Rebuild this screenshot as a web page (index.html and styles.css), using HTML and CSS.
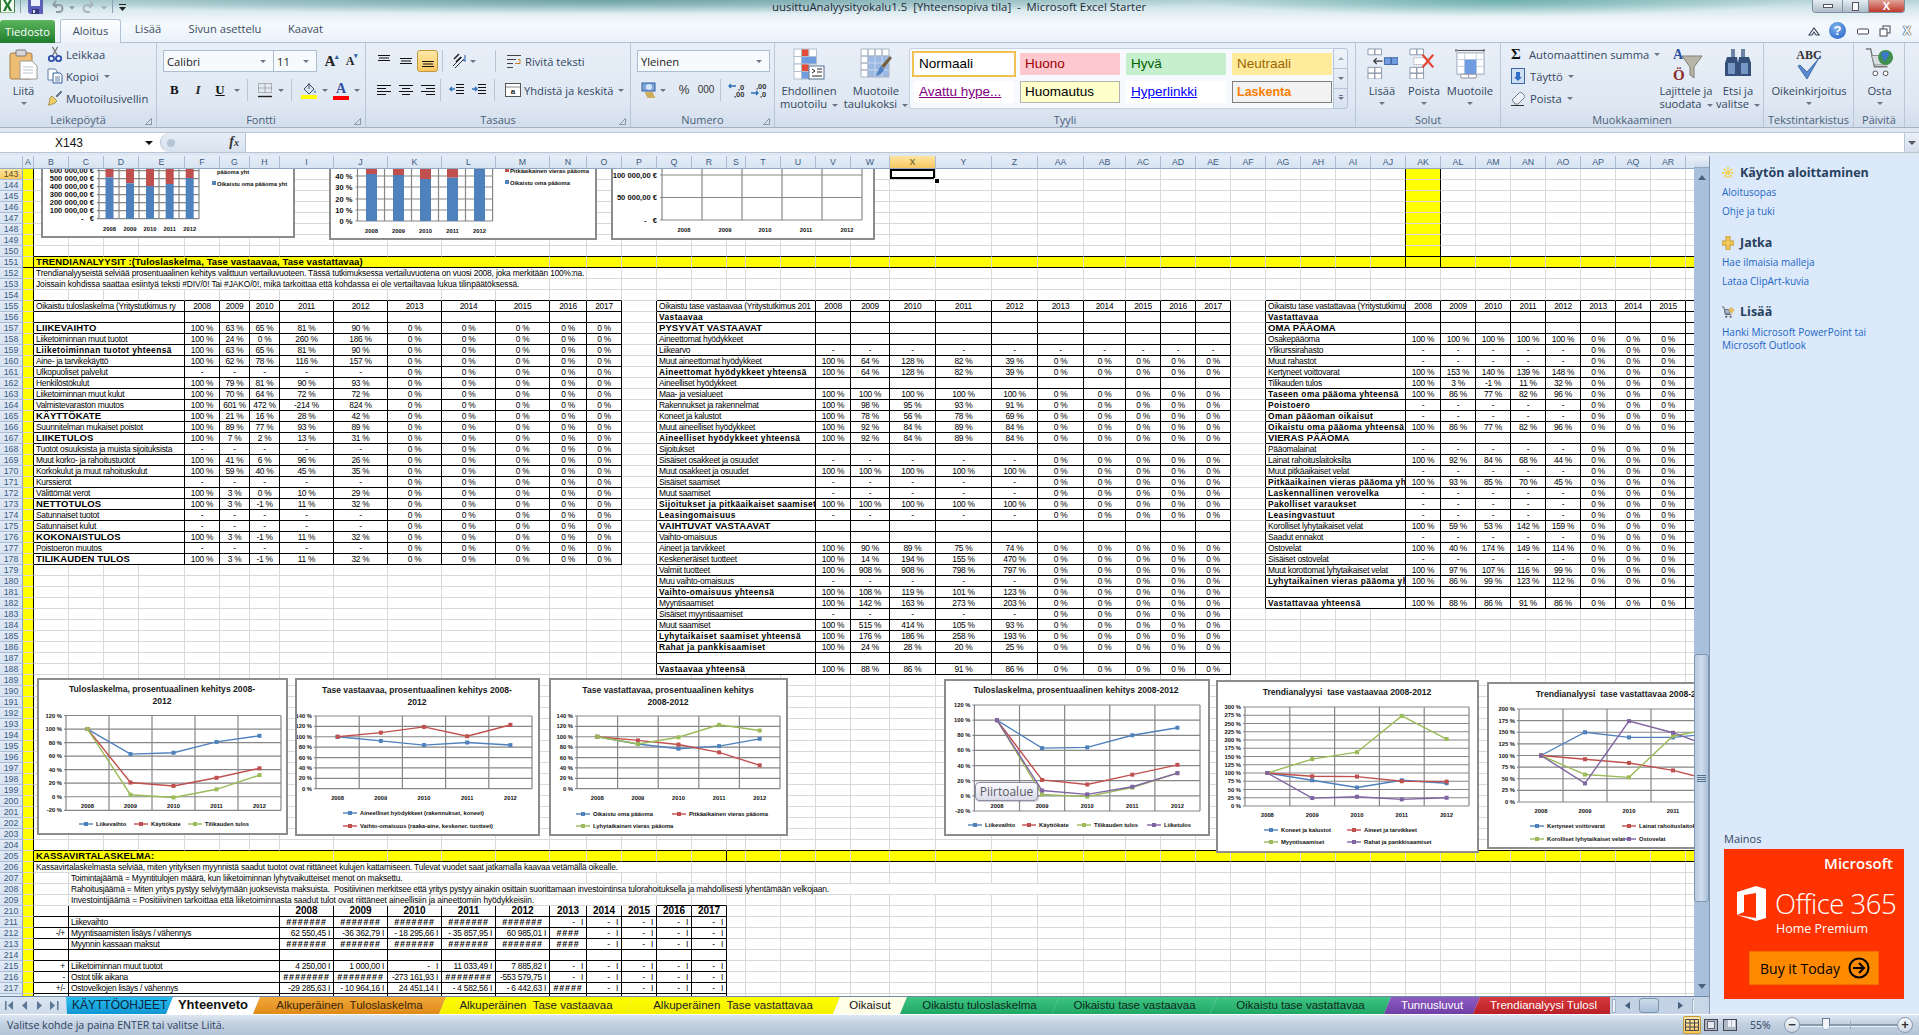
FILE: index.html
```html
<!DOCTYPE html>
<html lang="fi">
<head>
<meta charset="utf-8">
<title>uusittuAnalyysityokalu1.5 [Yhteensopiva tila] - Microsoft Excel Starter</title>
<link rel="stylesheet" href="styles.css">
</head>
<body>
<div class="app">
  <header class="top">
    <div class="titlebar">
      <div class="qat">
        <svg class="qi qi-x" viewBox="0 0 15 13"><rect x=".5" y="-2" width="14" height="15" rx="1" fill="#f4f9f2" stroke="#3f7d3f"/><path d="M3 0l3 5-3 6h2.600L7.500 7l2 4h2.600L9 5l3-5H9.500L7.500 3.500 5.500 0z" fill="#1f7a2e"/></svg>
        <span class="qsep"></span>
        <svg class="qi qi-s" viewBox="0 0 15 14"><path d="M0-1h15v15H2l-2-2z" fill="#5b5fb8"/><rect x="3" y="-1" width="9" height="7" fill="#eef3fb"/><rect x="4" y="9" width="7" height="5" fill="#3a3c80"/><rect x="5" y="10" width="2" height="3" fill="#d9def0"/></svg>
        <svg class="qi qi-u" viewBox="0 0 14 13"><path d="M3 5h6a3.500 3.500 0 0 1 0 7H6M3 5l3-4M3 5l4 2.500" fill="none" stroke="#8d9aa8" stroke-width="2"/></svg>
        <svg class="qi qi-a" viewBox="0 0 7 4"><path d="M0 0h7L3.500 4z" fill="#8d9aa8"/></svg>
        <svg class="qi qi-u" viewBox="0 0 14 13"><path d="M11 5H5a3.500 3.500 0 0 0 0 7h3M11 5L8 1M11 5L7 7.500" fill="none" stroke="#a8b4bf" stroke-width="2"/></svg>
        <svg class="qi qi-a" viewBox="0 0 7 4"><path d="M0 0h7L3.500 4z" fill="#a0abb6"/></svg>
        <span class="qsep"></span>
        <svg class="qi qi-c" viewBox="0 0 7 7"><path d="M0 0h7v1H0zM0 3h7L3.500 7z" fill="#222"/></svg>
      </div>
      <div class="wintitle">uusittuAnalyysityokalu1.5&nbsp; [Yhteensopiva tila]&nbsp; -&nbsp; Microsoft Excel Starter</div>
      <div class="winbtns">
        <span class="wb wb-min"><i></i></span>
        <span class="wb wb-max"><i></i></span>
        <span class="wb wb-close">X</span>
      </div>
    </div>
    <nav class="tabs">
      <span class="tab-file">Tiedosto</span>
      <span class="tab tab-on">Aloitus</span>
      <span class="tab tab-l">Lisää</span>
      <span class="tab tab-s">Sivun asettelu</span>
      <span class="tab tab-k">Kaavat</span>
      <div class="helpicons">
        <svg class="hi" viewBox="0 0 12 12"><path d="M1 10l5-7 5 7-3 0-2-3-2 3z" fill="#fff" stroke="#3a4a5e" stroke-width="1.200"/></svg>
        <span class="help">?</span>
        <svg class="hi" viewBox="0 0 12 12"><rect x=".5" y="4" width="11" height="5" rx="1" fill="#fff" stroke="#445"/></svg>
        <svg class="hi" viewBox="0 0 12 12"><rect x="4" y="1" width="7" height="7" fill="#fff" stroke="#445"/><rect x="1" y="4" width="7" height="7" fill="#fff" stroke="#445"/></svg>
        <span class="closex">X</span>
      </div>
    </nav>
  </header>

  <section class="ribbon">
    <div class="grp g-clip">
      <div class="gbody">
        <div class="big big-paste">
          <svg class="bigi" viewBox="0 0 30 32"><rect x="1" y="5" width="22" height="26" rx="2" fill="#eebd73" stroke="#a57f44"/><rect x="7" y="2" width="10" height="6" rx="1" fill="#d8d8d8" stroke="#777"/><path d="M11 13h12l5 5v13H11z" fill="#fff" stroke="#9a9a9a"/><path d="M14 19h10M14 22h10M14 25h10" stroke="#b8c4d2"/></svg>
          <span>Liitä</span><em class="caret"></em>
        </div>
        <div class="col3">
          <div class="sm"><svg class="i16" viewBox="0 0 16 18"><path d="M5 1l6 10M11 1L5 11" stroke="#777" stroke-width="1.500"/><circle cx="4" cy="14" r="3" fill="none" stroke="#2f4fa8" stroke-width="2"/><circle cx="12" cy="14" r="3" fill="none" stroke="#2f4fa8" stroke-width="2"/></svg>Leikkaa</div>
          <div class="sm"><svg class="i16" viewBox="0 0 16 16"><path d="M1 1h7l2 2v9H1z" fill="#fff" stroke="#5f7fa8"/><path d="M6 5h7l2 2v8H6z" fill="#fff" stroke="#2f5f9f"/><path d="M8 9h5M8 11h5M8 13h5" stroke="#5f7fa8"/></svg>Kopioi<em class="caret car-in"></em></div>
          <div class="sm"><svg class="i16" viewBox="0 0 16 16"><path d="M9 6l5-5 1 1-5 5z" fill="#6a7f9a" stroke="#3c4c60" stroke-width=".600"/><path d="M5 6l5 5-2 2c-2 1-5 2-7 2 2-2 1-4 2-7z" fill="#f1cf68" stroke="#8a7430" stroke-width=".700"/></svg>Muotoilusivellin</div>
        </div>
      </div>
      <div class="glabel">Leikepöytä<i class="launch"></i></div>
    </div>

    <div class="grp g-font">
      <div class="gbody col2">
        <div class="rowc">
          <span class="combo c-font">Calibri<em class="caret"></em></span>
          <span class="combo c-size">11<em class="caret"></em></span>
          <span class="ga ga-1">A<sup>▴</sup></span>
          <span class="ga ga-2">A<sup>▾</sup></span>
        </div>
        <div class="rowc fmt">
          <b class="f-b">B</b><i class="f-i">I</i><u class="f-u">U</u><em class="caret"></em>
          <span class="vsep"></span>
          <svg class="i16 f-bor" viewBox="0 0 16 16"><path d="M1.500 1.500h13v9h-13zM8 1.500v9M1.500 6h13" fill="none" stroke="#777" stroke-dasharray="1 1"/><path d="M1 14.500h14" stroke="#222" stroke-width="1.400"/></svg><em class="caret"></em>
          <span class="vsep"></span>
          <span class="f-fill"><svg class="i16" viewBox="0 0 16 13"><path d="M3 7l5-5 5 5-5 5z" fill="#dbe6f2" stroke="#3a4a5e"/><path d="M8 1V7" stroke="#3a4a5e"/><path d="M14 8c1 2 1 3 0 3s-1-1 0-3z" fill="#2f6fb5"/></svg><i class="bar-y"></i></span><em class="caret"></em>
          <span class="f-col">A<i class="bar-r"></i></span><em class="caret"></em>
        </div>
      </div>
      <div class="glabel">Fontti<i class="launch"></i></div>
    </div>

    <div class="grp g-align">
      <div class="gbody col2">
        <div class="rowc ar">
          <svg class="al" viewBox="0 0 16 16"><path d="M2 2.500h12M3 5h10M2 7.500h12" stroke="#111"/></svg>
          <svg class="al" viewBox="0 0 16 16"><path d="M2 5.500h12M3 8h10M2 10.500h12" stroke="#111"/></svg>
          <span class="al-on"><svg class="al" viewBox="0 0 16 16"><path d="M2 8.500h12M3 11h10M2 13.500h12" stroke="#111"/></svg></span>
          <span class="vsep"></span>
          <svg class="i16 rot" viewBox="0 0 16 16"><path d="M2 13L11 4M4 15L13 6" stroke="#333"/><path d="M3 6l5-5M5 9l5-5" stroke="#222" stroke-width="1.500"/><path d="M14 2v6l-2-1" fill="none" stroke="#3a6fb0" stroke-width="1.200"/></svg><em class="caret"></em>
          <span class="vsep vs2"></span>
          <span class="wrap"><svg class="i16" viewBox="0 0 16 16"><path d="M1 2.500h14M1 6.500h9M1 10.500h6M1 14.500h6" stroke="#444"/><path d="M12 6.500h2v4H9" fill="none" stroke="#d08020"/></svg>Rivitä teksti</span>
        </div>
        <div class="rowc ar">
          <svg class="al" viewBox="0 0 16 16"><path d="M1 3.500h14M1 6.500h9M1 9.500h14M1 12.500h9" stroke="#111"/></svg>
          <svg class="al" viewBox="0 0 16 16"><path d="M1 3.500h14M4 6.500h8M1 9.500h14M4 12.500h8" stroke="#111"/></svg>
          <svg class="al al3" viewBox="0 0 16 16"><path d="M1 3.500h14M6 6.500h9M1 9.500h14M6 12.500h9" stroke="#111"/></svg>
          <span class="vsep"></span>
          <svg class="al in1" viewBox="0 0 16 16"><path d="M7 2.500h8M7 5.500h8M7 8.500h8M7 11.500h8" stroke="#111"/><path d="M6 7H1m2-2L1 7l2 2" fill="none" stroke="#2f6fb5" stroke-width="1.400"/></svg>
          <svg class="al in2" viewBox="0 0 16 16"><path d="M7 2.500h8M7 5.500h8M7 8.500h8M7 11.500h8" stroke="#111"/><path d="M1 7h5M4 5l2 2-2 2" fill="none" stroke="#2f6fb5" stroke-width="1.400"/></svg>
          <span class="vsep vs3"></span>
          <span class="wrap"><svg class="i16" viewBox="0 0 16 16"><rect x=".5" y="1.500" width="15" height="13" fill="#fff" stroke="#555"/><path d="M1 5h14" stroke="#888"/><text x="8" y="12" class="mergea">a</text></svg>Yhdistä ja keskitä<em class="caret car-m"></em></span>
        </div>
      </div>
      <div class="glabel">Tasaus<i class="launch"></i></div>
    </div>

    <div class="grp g-num">
      <div class="gbody col2">
        <div class="rowc"><span class="combo c-num">Yleinen<em class="caret"></em></span></div>
        <div class="rowc nums">
          <svg class="i16 n-cur" viewBox="0 0 16 16"><rect x="1" y="1" width="13" height="8" fill="#7fa6d8" stroke="#2f5f9f"/><ellipse cx="8" cy="5" rx="3" ry="3" fill="#d5e4f6"/><path d="M4 11h8M5 13h8M6 15h8" stroke="#c99a2a" stroke-width="1.500"/></svg><em class="caret"></em>
          <span class="n-p">%</span><span class="n-t">000</span>
          <span class="vsep"></span>
          <span class="n-d"><svg class="nd" viewBox="0 0 20 16"><text x="10" y="8" class="ndt">,0</text><text x="6" y="15" class="ndt">,00</text><path d="M8 4H1m2-2L1 4l2 2" fill="none" stroke="#2f6fb5" stroke-width="1.300"/></svg></span>
          <span class="n-d"><svg class="nd" viewBox="0 0 20 16"><text x="6" y="7" class="ndt">,00</text><text x="10" y="15" class="ndt">,0</text><path d="M1 11h7M6 9l2 2-2 2" fill="none" stroke="#2f6fb5" stroke-width="1.300"/></svg></span>
        </div>
      </div>
      <div class="glabel">Numero<i class="launch"></i></div>
    </div>

    <div class="grp g-style">
      <div class="gbody">
        <div class="big big-cf">
          <svg class="bigi" viewBox="0 0 32 32"><g fill="#fff" stroke="#b4bfcc"><rect x="1" y="1" width="7.500" height="7.500"/><rect x="8.500" y="1" width="7.500" height="7.500" fill="#e44b3a"/><rect x="16" y="1" width="7.500" height="7.500"/><rect x="1" y="8.500" width="7.500" height="7.500"/><rect x="8.500" y="8.500" width="15" height="7.500" fill="#6f9be0"/><rect x="1" y="16" width="7.500" height="7.500"/><rect x="8.500" y="16" width="7.500" height="7.500" fill="#e44b3a"/><rect x="1" y="23.500" width="7.500" height="7.500"/><rect x="8.500" y="23.500" width="7.500" height="7.500" fill="#6f9be0"/></g><rect x="16" y="18" width="15" height="13" fill="#fff" stroke="#55708f"/><path d="M19 21l3 2-3 2M24 21h5M24 24h5M19 28h10" fill="none" stroke="#222"/></svg>
          <span>Ehdollinen<br>muotoilu<em class="caret car-in"></em></span>
        </div>
        <div class="big big-ft">
          <svg class="bigi" viewBox="0 0 32 32"><g fill="#fff" stroke="#a8b4c4"><path d="M1 1h7v7H1zM8 1h7v7H8zM15 1h7v7h-7zM22 1h7v7h-7zM1 8h7v7H1zM1 15h7v7H1zM1 22h7v7H1z"/></g><rect x="8" y="8" width="21" height="21" fill="#9bb9e3" stroke="#a8b4c4"/><path d="M15 8v21M22 8v21M8 15h21M8 22h21" stroke="#c9d8ee"/><path d="M30 8l2 2-8 10-3-2z" fill="#77603f"/><path d="M21 18l3 3c-1 4-5 6-9 7 3-2 3-7 6-10z" fill="#4f7fc0"/></svg>
          <span>Muotoile<br>taulukoksi<em class="caret car-in"></em></span>
        </div>
        <div class="gallery">
          <div class="cells">
            <span class="cs s-norm">Normaali</span><span class="cs s-bad">Huono</span><span class="cs s-good">Hyvä</span><span class="cs s-neu">Neutraali</span>
            <span class="cs s-fol">Avattu hype...</span><span class="cs s-note">Huomautus</span><span class="cs s-link">Hyperlinkki</span><span class="cs s-calc">Laskenta</span>
          </div>
          <div class="galbtns"><span><em class="caret up"></em></span><span><em class="caret"></em></span><span><em class="caret more"></em></span></div>
        </div>
      </div>
      <div class="glabel">Tyyli</div>
    </div>

    <div class="grp g-cells">
      <div class="gbody">
        <div class="big big-ins">
          <svg class="bigi" viewBox="0 0 32 32"><g fill="#fff" stroke="#8a99ac"><path d="M1 1h7v6H1zM8 1h7v6H8zM1 20h7v6H1zM8 20h7v6H8zM1 26h7v6H1zM8 26h7v6H8z"/></g><path d="M18 10h7v7h-7zM25 10h7v7h-7z" fill="#6f9be0" stroke="#3f66a0"/><path d="M16 13.500H7m3-3l-3 3 3 3" fill="none" stroke="#333" stroke-width="1.200"/></svg>
          <span>Lisää</span><em class="caret"></em>
        </div>
        <div class="big big-del">
          <svg class="bigi" viewBox="0 0 32 32"><g fill="#fff" stroke="#8a99ac"><path d="M1 1h7v6H1zM8 1h7v6H8zM1 20h7v6H1zM8 20h7v6H8zM1 26h7v6H1zM8 26h7v6H8z"/></g><rect x="5" y="10" width="14" height="7" fill="#fff" stroke="#999" stroke-dasharray="1 1"/><path d="M14 7l11 13M25 7L14 20" stroke="#e2442f" stroke-width="2.200"/></svg>
          <span>Poista</span><em class="caret"></em>
        </div>
        <div class="big big-form">
          <svg class="bigi" viewBox="0 0 32 32"><path d="M1 1v3M30 1v3M2 2.500h28" stroke="#444"/><rect x="2" y="5" width="28" height="22" fill="#fff" stroke="#9aa8ba"/><path d="M2 12h28M2 19h28M10 5v22M22 5v22" stroke="#c4cfdd"/><rect x="10" y="12" width="12" height="15" fill="#6f9be0"/><rect x="6" y="27" width="8" height="4" rx="1" fill="#fff" stroke="#889"/><rect x="14" y="27" width="8" height="4" rx="1" fill="#fff" stroke="#889"/></svg>
          <span>Muotoile</span><em class="caret"></em>
        </div>
      </div>
      <div class="glabel">Solut</div>
    </div>

    <div class="grp g-edit">
      <div class="gbody">
        <div class="col3 e3">
          <div class="sm"><span class="sigma">Σ</span>Automaattinen summa<em class="caret car-in"></em></div>
          <div class="sm"><svg class="i16 e-i" viewBox="0 0 14 16"><rect x=".5" y=".5" width="13" height="15" fill="#cfe0f5" stroke="#3f66a0"/><path d="M5 4h4v5h2l-4 4-4-4h2z" fill="#2f6fc8"/></svg>Täyttö<em class="caret car-in"></em></div>
          <div class="sm"><svg class="i16 e-i" viewBox="0 0 14 16"><path d="M1 10l7-7c1-1 2-1 3 0l2 2c1 1 1 2 0 3l-6 6H4z" fill="#eef2f7" stroke="#6a7a8c"/><path d="M0 15.500h13" stroke="#333"/></svg>Poista<em class="caret car-in"></em></div>
        </div>
        <div class="big big-sort">
          <svg class="bigi" viewBox="0 0 32 36"><text x="3" y="12" class="sa">A</text><text x="3" y="33" class="so">Ö</text><path d="M12 9h20L24 20v11l-4-3v-8z" fill="#b8b6a8" stroke="#7f7f70"/></svg>
          <span>Lajittele ja<br>suodata<em class="caret car-in"></em></span>
        </div>
        <div class="big big-find">
          <svg class="bigi" viewBox="0 0 30 30"><path d="M8 1h4v8H8zM18 1h4v8h-4z" fill="#6b84a6"/><path d="M4 9h10l1 6v13H2V15zM16 9h10l2 6v13H15V15z" fill="#35507a"/><path d="M5 15h7v11H5zM18 15h7v11h-7z" fill="#7696c6"/></svg>
          <span>Etsi ja<br>valitse<em class="caret car-in"></em></span>
        </div>
      </div>
      <div class="glabel">Muokkaaminen</div>
    </div>

    <div class="grp g-proof">
      <div class="gbody">
        <div class="big big-abc">
          <svg class="bigi" viewBox="0 0 34 32"><text x="17" y="11" class="abc">ABC</text><path d="M8 17l7 7L29 8l-1 0-13 23-9-13z" fill="#5b8ad0" stroke="#2f5f9f" stroke-width=".800"/></svg>
          <span>Oikeinkirjoitus</span><em class="caret"></em>
        </div>
      </div>
      <div class="glabel">Tekstintarkistus</div>
    </div>

    <div class="grp g-buy">
      <div class="gbody">
        <div class="big big-buy">
          <svg class="bigi" viewBox="0 0 32 32"><path d="M1 1h5l4 19h14" fill="none" stroke="#777" stroke-width="1.500"/><path d="M7 8h20l-3 10H10z" fill="#d8dde3" stroke="#888"/><circle cx="22" cy="10" r="8" fill="#3f8f4f"/><path d="M17 6c3-3 7-3 9 0-2 3-2 7-6 8z" fill="#3b78c8"/><circle cx="11" cy="27" r="2.500" fill="#fff" stroke="#444"/><circle cx="22" cy="27" r="2.500" fill="#fff" stroke="#444"/></svg>
          <span>Osta</span><em class="caret"></em>
        </div>
      </div>
      <div class="glabel">Päivitä</div>
    </div>
  </section>

  <div class="formula">
    <div class="namebox"><span>X143</span><em class="caret dark"></em></div>
    <div class="fxzone"><i class="fxdot"></i><span class="fx">f<small>x</small></span></div>
    <div class="finput"></div>
    <div class="fdrop"><em class="caret dark"></em></div>
  </div>

  <main class="work">
    <div class="leftcol">
      <div class="sheetrow">
        <div class="sheet" id="sheet">
          <table class="grid" id="grid"></table>
          <div class="chart ch-a" id="ch-a"></div>
          <div class="chart ch-b" id="ch-b"></div>
          <div class="chart ch-c" id="ch-c"></div>
          <div class="chart ch-d" id="ch-d"></div>
          <div class="chart ch-e" id="ch-e"></div>
          <div class="chart ch-f" id="ch-f"></div>
          <div class="chart ch-g" id="ch-g"></div>
          <div class="chart ch-h" id="ch-h"></div>
          <div class="chart ch-i" id="ch-i"></div>
          <div class="tip">Piirtoalue</div>
          <i class="handle"></i>
        </div>
        <div class="vscroll">
          <span class="vsplit"></span>
          <span class="vbtn"><em class="caret up dark2"></em></span>
          <div class="vtrack"><div class="vthumb"><i></i></div></div>
          <span class="vbtn"><em class="caret dark2"></em></span>
        </div>
      </div>
      <div class="tabstrip">
        <div class="tabnav">
          <svg viewBox="0 0 9 9"><path d="M0 0h1.500v9H0zM8 0v9L3 4.500z" fill="#5c7696"/></svg>
          <svg viewBox="0 0 9 9"><path d="M7 0v9L2 4.500z" fill="#5c7696"/></svg>
          <svg viewBox="0 0 9 9"><path d="M2 0v9l5-4.500z" fill="#5c7696"/></svg>
          <svg viewBox="0 0 9 9"><path d="M0 0v9l5-4.500zM7 0h1.500v9H7z" fill="#5c7696"/></svg>
        </div>
        <div class="sheettabs">
          <span class="st st-ohj">KÄYTTÖOHJEET</span>
          <span class="st st-yht">Yhteenveto</span>
          <span class="st st-alk1">Alkuperäinen&nbsp; Tuloslaskelma</span>
          <span class="st st-alk2">Alkuperäinen&nbsp; Tase vastaavaa</span>
          <span class="st st-alk3">Alkuperäinen&nbsp; Tase vastattavaa</span>
          <span class="st st-oik">Oikaisut</span>
          <span class="st st-g1">Oikaistu tuloslaskelma</span>
          <span class="st st-g2">Oikaistu tase vastaavaa</span>
          <span class="st st-g3">Oikaistu tase vastattavaa</span>
          <span class="st st-tun">Tunnusluvut</span>
          <span class="st st-tre">Trendianalyysi Tulosl</span>
        </div>
        <div class="hscroll">
          <span class="hsplit"></span>
          <svg class="harr" viewBox="0 0 6 9"><path d="M6 0v9L0 4.500z" fill="#46607f"/></svg>
          <span class="hthumb"></span>
          <svg class="harr" viewBox="0 0 6 9"><path d="M0 0v9l6-4.500z" fill="#46607f"/></svg>
          <span class="hsplit"></span>
        </div>
        <div class="corner"></div>
      </div>
    </div>
    <aside class="pane">
      <h2 class="ph"><svg viewBox="0 0 12 12"><path d="M6 0v12M0 6h12M2 2l8 8M10 2l-8 8" stroke="#f2d255" stroke-width="2" stroke-dasharray="2 1"/></svg>Käytön aloittaminen</h2>
      <a class="pl">Aloitusopas</a>
      <a class="pl pn">Ohje ja tuki</a>
      <h2 class="ph ph2"><svg viewBox="0 0 12 14"><path d="M4 0h4v5h4v4H8v5H4V9H0V5h4z" fill="#f0c85a" stroke="#c79a30"/></svg>Jatka</h2>
      <a class="pl">Hae ilmaisia malleja</a>
      <a class="pl pn">Lataa ClipArt-kuvia</a>
      <h2 class="ph ph2"><svg viewBox="0 0 14 14"><path d="M0 1h2l2 9h7" fill="none" stroke="#555"/><path d="M3 4h6v5H4z" fill="#9fb7d6" stroke="#667"/><path d="M10 2h2v2h2v2h-2v2h-2V6H8V4h2z" fill="#f0c85a" stroke="#c79a30" stroke-width=".500"/><circle cx="5" cy="12.500" r="1.200" fill="#555"/><circle cx="10" cy="12.500" r="1.200" fill="#555"/></svg>Lisää</h2>
      <a class="pl pl2">Hanki Microsoft PowerPoint tai<br>Microsoft Outlook</a>
      <div class="adblock">
        <div class="adlabel">Mainos</div>
        <div class="ad">
          <div class="ad-ms">Microsoft</div>
          <div class="ad-o">
            <svg class="ad-logo" viewBox="0 0 29 35"><path d="M0 6L19 0l10 3v29l-10 3L0 29l19 3V7L7 9v17L0 29z" fill="#fff"/></svg>
            <span>Office 365</span>
          </div>
          <div class="ad-hp">Home Premium</div>
          <div class="ad-buy"><span>Buy it Today</span><svg viewBox="0 0 22 22"><circle cx="11" cy="11" r="9.500" fill="none" stroke="#000" stroke-width="2"/><path d="M5 11h11M11 6l5 5-5 5" fill="none" stroke="#000" stroke-width="2"/></svg></div>
        </div>
      </div>
    </aside>
  </main>

  <footer class="status">
    <span class="stext">Valitse kohde ja paina ENTER tai valitse Liitä.</span>
    <div class="sright">
      <span class="vw vw-on"><svg viewBox="0 0 14 12"><path d="M.5.500h13v11H.5zM.5 4h13M.5 8h13M5 .500v11M9.500.500v11" fill="none" stroke="#445"/></svg></span>
      <span class="vw"><svg viewBox="0 0 14 12"><rect x=".5" y=".5" width="13" height="11" fill="#aeb8c4" stroke="#445"/><rect x="3.500" y="2.500" width="7" height="7" fill="#e4e9f0" stroke="#667"/></svg></span>
      <span class="vw"><svg viewBox="0 0 14 12"><rect x=".5" y=".5" width="13" height="11" fill="#aeb8c4" stroke="#445"/><path d="M5 1h3v7H5z M9 1h3v7H9z" fill="#eef1f5"/></svg></span>
      <span class="zpct">55%</span>
      <span class="zb">−</span>
      <span class="ztrack"><i class="ztick"></i><i class="zthumb"></i></span>
      <span class="zb">+</span>
    </div>
  </footer>
</div>
<script src="script.js"></script>
</body>
</html>
```

FILE: styles.css
```css
*{box-sizing:border-box}
html,body{margin:0;padding:0;width:1919px;height:1035px;overflow:hidden;background:#dfe7f2}
body{font-family:"Open Sans","Noto Sans",sans-serif;font-size:11.2px;color:#33475f}
.app{width:1919px;height:1035px;display:flex;flex-direction:column}
em{font-style:normal}
.caret{display:inline-block;width:0;height:0;border-left:3px solid transparent;border-right:3px solid transparent;border-top:3px solid #6b7788;vertical-align:middle}
.caret.up{border-top:0;border-bottom:3px solid #9aa8ba}
.caret.dark{border-top-color:#111;border-left-width:4px;border-right-width:4px;border-top-width:4px}
.caret.dark2{border-top-color:#4a6280;border-bottom-color:#4a6280;border-left-width:4px;border-right-width:4px;border-top-width:5px}
.caret.up.dark2{border-top-width:0;border-bottom-width:5px}
.car-in{margin-left:5px}

/* top chrome */
.top{height:43px;background:radial-gradient(ellipse 640px 14px at 600px 0,#6fa3a6 0,rgba(111,163,166,0) 100%),radial-gradient(ellipse 300px 16px at 1500px 0,#6fb0ad 0,rgba(111,176,173,0) 100%),linear-gradient(#b4d3d8 0,#d8e9ee 9px,#f4f9fd 24px,#e9f1fa 43px)}
.titlebar{height:19px;display:flex;align-items:flex-start;position:relative}
.qat{width:772px;flex:none;display:flex;align-items:flex-start}
.qi{display:block;flex:none}
.qi-x{width:15px;height:13px}
.qsep{width:1px;height:13px;background:#8ba0b4;margin:0 7px 0 5px}
.qi-s{width:15px;height:14px}
.qi-u{width:14px;height:13px;margin-left:7px}
.qi-a{width:6px;height:4px;margin:6px 0 0 5px}
.qi-c{width:7px;height:7px;margin:4px 0 0 -1px}
.wintitle{font-size:11.400px;color:#1d2a38;line-height:14px;white-space:nowrap}
.winbtns{margin-left:auto;margin-right:14px;display:flex;height:13px;border:1px solid #7f8ea0;border-top:0;border-radius:0 0 4px 4px;overflow:hidden}
.wb{display:flex;align-items:center;justify-content:center;height:12px;background:linear-gradient(#e4edf2,#aebcc8);border-right:1px solid #8895a5}
.wb-min{width:30px}.wb-max{width:26px}
.wb-min i{width:10px;height:4px;background:#f8fafc;border:1px solid #556}
.wb-max i{width:7px;height:9px;background:#f8fafc;border:1px solid #556}
.wb-close{width:35px;background:linear-gradient(#e0a49a,#c0392b);color:#fff;font-weight:700;font-size:11px;border:0;line-height:10px}

.tabs{height:24px;display:flex;align-items:flex-end;border-bottom:1px solid #b1c2d5}
.tab-file{width:55px;height:23px;background:linear-gradient(#5cb55c,#1e7c2e);color:#fff;line-height:23px;text-align:center;border-radius:3px 3px 0 0;flex:none;margin-bottom:-1px}
.tab{line-height:22px;height:24px;text-align:center;flex:none;color:#3d4d60}
.tab-on{width:61px;margin-left:5px;background:linear-gradient(#fff,#ecf2f9);border:1px solid #b1c2d5;border-bottom:0;border-radius:3px 3px 0 0;margin-bottom:-1px}
.tab-l{width:54px}.tab-s{width:100px}.tab-k{width:61px}
.helpicons{margin-left:auto;height:23px;display:flex;align-items:center;padding-right:4px}
.hi{width:12px;height:12px;margin-left:10px;flex:none}
.help{width:17px;height:17px;margin-left:9px;border-radius:50%;background:radial-gradient(circle at 40% 30%,#7fb2ee,#1f5fc4);color:#fff;font:700 13px/17px "Liberation Sans",sans-serif;text-align:center;flex:none}
.closex{margin-left:12px;width:12px;font:700 12px/12px "Liberation Sans",sans-serif;color:#fff;text-shadow:0 0 1px #234,0 0 1px #234,0 0 1px #234}
.help+.hi{margin-left:11px}

/* ribbon */
.ribbon{height:85px;display:flex;background:linear-gradient(#e8eff8 0,#dfe8f3 70%,#d4deeb 100%);border-bottom:1px solid #a3b4c8;flex:none}
.grp{flex:none;display:flex;flex-direction:column;border-right:1px solid #b9c8d9;position:relative}
.gbody{height:70px;display:flex;flex:none}
.glabel{height:14px;line-height:13px;text-align:center;color:#4a5f7c;font-size:11px;position:relative}
.launch{position:absolute;right:4px;bottom:2px;width:7px;height:7px;border-right:1px solid #8a99ac;border-bottom:1px solid #8a99ac;background:linear-gradient(135deg,transparent 55%,#8a99ac 55%,#8a99ac 65%,transparent 65%)}
.g-clip{width:157px}.g-font{width:209px}.g-align{width:265px}.g-num{width:144px}.g-style{width:581px}.g-cells{width:145px}.g-edit{width:263px}.g-proof{width:90px}.g-buy{width:51px}
.big{flex:none;display:flex;flex-direction:column;align-items:center;line-height:13px;text-align:center;padding-top:5px;color:#33475f;white-space:nowrap}
.big .bigi{width:32px;height:30px;margin-bottom:6px;flex:none}
.big>.caret{margin-top:5px}
.big-paste{width:47px}
.big-paste .bigi{width:30px;height:32px;margin-bottom:4px;margin-left:0}
.col3{display:flex;flex-direction:column;padding-top:0}
.sm{height:22px;display:flex;align-items:center;white-space:nowrap;color:#33475f}
.i16{width:16px;height:16px;flex:none;display:block}
.sm .i16{margin-right:3px}
.col2{flex-direction:column;padding:7px 0 0 6px;gap:7px}
.rowc{display:flex;align-items:center;height:22px}
.combo{height:22px;background:#f7fafd;border:1px solid #acbdd2;font-size:11.200px;color:#1b1b1b;display:flex;align-items:center;justify-content:space-between;padding:0 7px 0 3px;flex:none}
.c-font{width:111px}.c-size{width:44px;margin-left:-1px}
.ga{font:700 15px/22px "Liberation Serif",serif;color:#222;width:20px;text-align:center}
.ga sup{font-size:7px;color:#2f5f9f;line-height:0;vertical-align:7px}
.ga-1{margin-left:5px}.ga-2{font-size:12px}
.fmt{padding-left:7px}
.f-b{font:700 13px/22px "Liberation Serif",serif;color:#111;width:17px}
.f-i{font:italic 700 13px/22px "Liberation Serif",serif;color:#222;width:22px;text-align:center}
.f-u{font:700 13px/22px "Liberation Serif",serif;color:#111;width:18px;text-align:center;margin-left:2px}
.fmt .caret{margin-left:5px}
.vsep{width:1px;height:22px;background:#b7c6d7;margin:0 9px 0 7px;flex:none}
.f-fill{position:relative;margin-left:0;width:16px;height:22px;display:flex;flex-direction:column;justify-content:center}
.f-fill .i16{height:13px}
.bar-y{display:block;height:4px;background:#ff0;margin-top:0}
.f-col{width:16px;margin-left:5px;font:700 14px/15px "Liberation Serif",serif;color:#2f4f9f;text-align:center;display:flex;flex-direction:column}
.bar-r{display:block;height:4px;background:#f00}
.ar{padding-left:4px}
.al{width:16px;height:16px;flex:none;display:block;margin-right:6px}
.al3{margin-right:0}
.al-on{width:21px;height:22px;border:1px solid #c4973c;border-radius:3px;background:linear-gradient(#fde9a8,#f9c85e);display:flex;align-items:center;justify-content:center;flex:none;margin-left:-3px}
.al-on .al{margin:0}
.ar .vsep{margin:0 8px 0 4px}
.ar .vs2{margin:0 10px 0 19px}
.ar .vs3{margin:0 10px 0 0}
.ar .vsep+.al3{margin:0}
.rot{margin-right:3px}
.wrap{display:flex;align-items:center;white-space:nowrap;color:#33475f}
.wrap .i16{margin-right:3px}
.car-m{margin-left:4px}
.mergea{font:700 8px "Liberation Sans",sans-serif;text-anchor:middle;fill:#222}
.in1{margin-right:6px}.in2{margin-right:7px}
.c-num{width:133px}
.nums{padding-left:4px}
.n-cur{margin-right:3px}
.n-p{font:400 12px/22px "Liberation Sans",sans-serif;color:#333;margin-left:11px;width:14px;text-align:center}
.n-t{font:400 10px/22px "Liberation Sans",sans-serif;color:#333;margin-left:6px;width:18px;text-align:center}
.nums .vsep{margin:0 7px 0 5px}
.n-d{margin-right:2px}
.nd{width:20px;height:16px;display:block}
.ndt{font:700 7.500px "Liberation Sans",sans-serif;fill:#333}

.big-cf{width:68px}.big-ft{width:66px}
.big-cf .bigi,.big-ft .bigi{width:32px;height:32px;margin-bottom:4px}
.gallery{display:flex;margin-top:5px;height:61px;flex:none}
.cells{display:grid;grid-template-columns:repeat(4,100px);grid-template-rows:22px 22px;gap:6px;padding:4px 4px 4px 4px;background:#f6f9fd;border:1px solid #c5d2e2;border-right:0;border-radius:3px 0 0 3px;width:424px}
.cs{font:13.500px/20px "Liberation Sans",sans-serif;padding-left:4px;white-space:nowrap;overflow:hidden;border:1px solid transparent;color:#000}
.s-norm{background:#fff;border-color:#fff;position:relative;outline:2.500px solid #f0c050;outline-offset:0}
.s-bad{background:#ffc7ce;color:#9c0006}.s-good{background:#c6efce;color:#006100}.s-neu{background:#ffeb9c;color:#9c6500}
.s-fol{background:#fff;color:#800080;text-decoration:underline}
.s-note{background:#ffc;border-color:#b2b2b2}
.s-link{background:#fff;color:#00f;text-decoration:underline}
.s-calc{background:#f2f2f2;border-color:#7f7f7f;color:#fa7d00;font-weight:700;font-size:12.500px}
.galbtns{width:15px;display:flex;flex-direction:column;border:1px solid #b4c4d8;border-radius:0 3px 3px 0;background:linear-gradient(#eef3fa,#d9e3f0)}
.galbtns span{flex:1;display:flex;align-items:center;justify-content:center;border-bottom:1px solid #b4c4d8}
.galbtns span:last-child{border:0}
.caret.more{box-shadow:0 -3px 0 -1px #6b7788}
.big-ins{width:52px}.big-del{width:32px}.big-form{width:60px}
.big-ins .bigi,.big-del .bigi,.big-form .bigi{width:31px;height:31px;margin-bottom:5px}
.e3{width:157px;padding-left:10px}
.sigma{font:700 15px/22px "Liberation Serif",serif;color:#111;width:18px;flex:none}
.e-i{margin-right:5px!important;width:14px}
.big-sort{width:56px}.big-find{width:48px}
.big-sort .bigi{width:32px;height:36px;margin:-1px 0 1px}
.sa{font:700 14px "Liberation Serif",serif;fill:#2f4f9f}
.so{font:700 15px "Liberation Serif",serif;fill:#8a2c2c}
.big-abc{width:90px}
.abc{font:700 12px "Liberation Serif",serif;text-anchor:middle;fill:#333}
.big-abc .bigi{width:34px;height:32px;margin-bottom:4px}
.big-buy{width:51px}
.big-buy .bigi{margin-bottom:6px}

/* formula bar */
.formula{height:21px;margin-top:4px;display:flex;flex:none;background:#fff;border-top:1px solid #b7c5d6;border-bottom:1px solid #b7c5d6}
.namebox{width:157px;display:flex;align-items:center;position:relative;background:#fff;font:12px "Liberation Sans",sans-serif;color:#111;padding-left:55px;flex:none;justify-content:space-between;padding-right:4px}
.fxzone{width:86px;margin-left:3px;flex:none;background:linear-gradient(#e6edf6,#d8e2ef);border:1px solid #b7c5d6;border-width:0 1px 0 1px;border-radius:10px 0 0 10px;display:flex;align-items:center;justify-content:space-between;padding:0 6px}
.fxdot{width:8px;height:8px;border-radius:50%;background:#b8c5d4}
.fx{font:italic 700 14px/16px "Liberation Serif",serif;color:#333}
.fx small{font-size:10px}
.finput{flex:1;background:#fff}
.fdrop{width:15px;flex:none;background:linear-gradient(#eaf0f7,#d5dfec);border-left:1px solid #b7c5d6;display:flex;align-items:center;justify-content:center}
.fdrop .caret{border-top-color:#556}

/* workspace */
.work{flex:none;height:858px;margin-top:3px;display:flex}
.leftcol{width:1710px;flex:none;display:flex;flex-direction:column}
.sheetrow{height:840px;display:flex;flex:none}
.sheet{width:1694px;height:840px;position:relative;overflow:hidden;background:#fff;flex:none}
.grid{border-collapse:separate;border-spacing:0;table-layout:fixed;font:8.400px/10px "Liberation Sans",sans-serif;color:#000}
.grid th{height:13px;padding:0;font:400 8.800px/12px "Liberation Sans",sans-serif;color:#3b5a82;background:linear-gradient(#e6eef8,#d6e3f2);border-right:1px solid #a9bdd4;border-bottom:1px solid #8fa8c4;overflow:hidden}
.grid th.csel{background:linear-gradient(#fde5a0,#f8c862);color:#5a4a1a}
.grid td{height:11px;padding:0 1px;border-right:1px solid #d9d9d9;border-bottom:1px solid #d9d9d9;overflow:hidden;white-space:nowrap;letter-spacing:-.25px}
.grid td.rh{background:linear-gradient(#e2ebf6,#d6e2f1);border-right:1px solid #8fa8c4;border-bottom:1px solid #a9bdd4;color:#3b5a82;text-align:center;font-size:8.800px;letter-spacing:0;padding:0}
.grid td.rsel{background:linear-gradient(#fde5a0,#f8c862);color:#5a4a1a}
.grid td.y{background:#ff0}
.grid td.br{border-right-color:#000}
.grid td.bb{border-bottom-color:#000}
.grid td.c{text-align:center}
.grid td.r{text-align:right;padding-right:3px}
.grid td.l{padding-left:2px}
.grid td.b{font-weight:700;letter-spacing:.4px}
.grid td.h{font-weight:700;font-size:9.500px;letter-spacing:.1px}
.grid td.yb{font-weight:700;font-size:10px;letter-spacing:0}
.grid td.ha{font-weight:700;letter-spacing:.8px;font-size:9px}
.grid td.ls1{letter-spacing:-.1px}
.grid td.ls2{letter-spacing:-.17px}
.grid td.sel{box-shadow:inset 0 0 0 2px #000}
.handle{position:absolute;left:934px;top:22px;width:4px;height:4px;background:#000;border:1px solid #fff;box-sizing:content-box}
.chart{position:absolute;background:#fff;border:2px solid #8c8c8c;overflow:hidden}
.chart svg{display:block}
.chart text{font:700 5.800px "Liberation Sans",sans-serif;fill:#111;white-space:pre}
.chart text.tt{font-size:8.600px;text-anchor:middle;fill:#1b1b1b}
.chart text.big6{font-size:7.600px}
.ch-a{left:41px;top:13px;width:254px;height:69px;border-top:0}
.ch-b{left:329px;top:13px;width:268px;height:71px;border-top:0}
.ch-c{left:611px;top:13px;width:264px;height:71px;border-top:0}
.ch-d{left:37px;top:522px;width:251px;height:157px}
.ch-e{left:295px;top:522px;width:245px;height:158px}
.ch-f{left:549px;top:522px;width:239px;height:158px}
.ch-g{left:944px;top:523px;width:266px;height:157px}
.ch-h{left:1216px;top:524px;width:263px;height:173px}
.ch-i{left:1487px;top:526px;width:272px;height:167px}
.tip{position:absolute;left:975px;top:626px;width:63px;height:19px;border:1px solid #8c8ca5;border-radius:4px;background:linear-gradient(#fbfbff,#dcdcea);font:12px/17px "Open Sans",sans-serif;color:#5a5a66;text-align:center;box-shadow:1px 1px 1px rgba(0,0,0,.2)}

.vscroll{width:16px;flex:none;height:840px;display:flex;flex-direction:column;background:#a9c0dc;border-right:1px solid #7f95ae}
.vsplit{height:12px;background:linear-gradient(#eef3fa,#cddbec);border-bottom:1px solid #8fa8c4;flex:none}
.vbtn{height:19px;flex:none;display:flex;align-items:center;justify-content:center}
.vtrack{flex:1;padding-top:467px}
.vthumb{height:248px;background:linear-gradient(90deg,#b8cbe2,#cfdded 50%,#a9bfd9);border:1px solid #7f95ae;border-radius:3px;display:flex;align-items:center;justify-content:center}
.vthumb i{display:block;width:9px;height:7px;background:repeating-linear-gradient(#55708f 0,#55708f 1px,transparent 1px,transparent 2px)}
.tabstrip{height:18px;display:flex;flex:none;background:linear-gradient(#dbe5f2,#cfdbea);border-top:1px solid #6f8aa8}
.tabnav{width:63px;flex:none;display:flex;align-items:center;padding-left:5px;gap:6px}
.tabnav svg{width:9px;height:9px;flex:none}
.sheettabs{width:1547px;flex:none;display:flex;overflow:hidden}
.st{flex:none;height:17px;font:11.500px/16px "Liberation Sans",sans-serif;text-align:center;white-space:nowrap;color:#10231c;clip-path:polygon(7px 0,100% 0,calc(100% - 7px) 100%,0 100%);padding:0 9px;margin-right:-7px;overflow:hidden}
.st-ohj{width:110px;background:linear-gradient(#28bdf0,#1296d2);clip-path:polygon(3px 0,100% 0,calc(100% - 4px) 100%,4px 100%);color:#0b2740;font-size:12px}
.st-yht{width:94px;background:#fff;font-weight:700;font-size:13px;color:#111}
.st-alk1{width:193px;background:linear-gradient(#f0a83a,#e08a18);color:#3a2508}
.st-alk2{width:194px;background:linear-gradient(#ff0,#f4f000);color:#222}
.st-alk3{width:214px;background:linear-gradient(#ff0,#f4f000);color:#222}
.st-oik{width:74px;background:#fdfde8;color:#111}
.st-g1{width:159px;background:linear-gradient(#3fc583,#1fa765);color:#0c2a1a}
.st-g2{width:165px;background:linear-gradient(#3fc583,#1fa765);color:#0c2a1a}
.st-g3{width:181px;background:linear-gradient(#3fc583,#1fa765);color:#0c2a1a}
.st-tun{width:96px;background:linear-gradient(#8e5cc0,#6f3fa8);color:#fff}
.st-tre{width:150px;background:linear-gradient(#d83a3a,#b81f28);color:#fff;padding-right:18px;margin-right:0}
.hscroll{width:84px;flex:none;display:flex;align-items:center;background:#c3d2e4;gap:5px;padding:0 2px}
.hsplit{width:4px;height:14px;background:#eef3fa;border:1px solid #9fb2c8;flex:none}
.harr{width:5px;height:9px;flex:none;margin:0 4px}
.hthumb{width:20px;height:15px;background:linear-gradient(#cfdded,#a9bfd9);border:1px solid #7f95ae;border-radius:3px;flex:none;margin-right:10px}
.corner{width:16px;flex:none;background:#c8d6e7;border-right:1px solid #7f95ae}

.pane{width:209px;flex:none;height:858px;background:#dce9fa;padding:10px 0 15px 12px;display:flex;flex-direction:column;color:#27415f}
.ph{margin:0;font-size:12.500px;line-height:14px;font-weight:700;color:#27415f;display:flex;align-items:center;height:14px;white-space:nowrap}
.ph svg{width:12px;height:14px;margin-right:6px;flex:none}
.ph2{margin-top:14.500px}
.pl{display:block;color:#2266c4;font-size:10px;line-height:19px;white-space:nowrap;margin-top:3px}
.pn{margin-top:0}
.pl2{line-height:13px;margin-top:7px}
.adblock{margin-top:auto;width:180px;margin-left:2px}
.adlabel{font-size:11px;line-height:16px;color:#33475f;margin-bottom:2px}
.ad{width:180px;height:150px;background:#f30;color:#fff;display:flex;flex-direction:column;padding:0;font-family:"Open Sans",sans-serif}
.ad-ms{font-weight:600;font-size:15px;line-height:18px;text-align:right;padding:5px 11px 0 0}
.ad-o{display:flex;align-items:center;margin:14px 0 0 13px;height:35px}
.ad-logo{width:29px;height:35px;flex:none}
.ad-o span{font-weight:300;font-size:27.500px;line-height:35px;margin-left:9px;letter-spacing:-.5px;white-space:nowrap}
.ad-hp{font-size:12.500px;line-height:18px;margin:-1px 0 0 52px;font-weight:400;white-space:nowrap}
.ad-buy{width:130px;height:34px;background:#ff8a00;margin:13px 0 0 25px;color:#000;display:flex;align-items:center;padding-left:10px;font-size:14px;white-space:nowrap;gap:8px;border:1px solid #ef7000}
.ad-buy svg{width:22px;height:22px;flex:none}

.status{flex:none;height:21px;background:linear-gradient(#dde6f2,#c5d2e2 40%,#b3c3d7);display:flex;align-items:center;padding-left:7px;border-top:1px solid #fff}
.stext{font-size:10.600px;color:#2e4462;white-space:nowrap}
.sright{margin-left:auto;display:flex;align-items:center;height:20px;padding-right:3px;width:236px}
.vw{width:18px;height:18px;display:flex;align-items:center;justify-content:center;flex:none;margin-right:1px}
.vw svg{width:14px;height:12px}
.vw-on{background:linear-gradient(#fde9a8,#f9c85e);border:1px solid #c4973c;border-radius:2px}
.zpct{font-size:10.500px;color:#2e4462;margin-left:10px;width:34px;flex:none}
.zb{width:16px;height:16px;border-radius:50%;border:1px solid #8a99ac;background:linear-gradient(#f6f9fd,#cdd8e6);color:#333;font:700 13px/13px "Liberation Sans",sans-serif;text-align:center;flex:none}
.ztrack{width:97px;height:2px;background:#8a99ac;position:relative;flex:none;box-shadow:0 1px 0 #eef3fa}
.ztick{position:absolute;left:50px;top:-3px;width:1px;height:8px;background:#9aa8ba}
.zthumb{position:absolute;left:22px;top:-6px;width:8px;height:12px;background:#f2f5fa;border:1px solid #667c96;clip-path:polygon(0 0,100% 0,100% 65%,50% 100%,0 65%)}
```

FILE: script.js
```javascript
(function(){
  var W=[11,35,35,35,46,35,30,30,54,54,54,54,54,37,35,35,35,35,19,35,35,35,39,46,56,46,46,42,35,35,35,35,35,35,35,35,35,35,35,35,35,35,35,35,40];
  var nC=W.length,R0=143,R1=218;
  var A='ABCDEFGHIJKLMNOPQRSTUVWXYZ';
  function cname(i){return i<26?A[i]:'A'+A[i-26];}
  var g={};
  for(var r=R0;r<=R1;r++){g[r]=[];for(var c=0;c<nC;c++)g[r][c]={t:'',cl:{},span:1,cov:false};}
  function put(r,c,span,t,cls){
    var o=g[r][c];o.t=t;o.span=span;
    (cls||'').split(' ').forEach(function(k){if(k)o.cl[k]=1;});
    for(var i=1;i<span;i++)g[r][c+i].cov=true;
  }
  function mark(r,c,k){if(g[r]&&g[r][c])g[r][c].cl[k]=1;}
  function box(r0,r1,c0,c1){
    for(var r=r0;r<=r1;r++){
      for(var c=c0;c<=c1;c++){
        mark(r,c,'br');mark(r,c,'bb');
        if(r===r0)mark(r-1,c,'bb');
      }
      mark(r,c0-1,'br');
    }
  }
  var YRS=[2008,2009,2010,2011,2012,2013,2014,2015,2016,2017];
  function pc(a){return a.map(function(v){return v+' %';}).concat(['0 %','0 %','0 %','0 %','0 %']);}
  var D=['-','-','-','-','-','0 %','0 %','0 %','0 %','0 %'];
  var DA=['-','-','-','-','-','-','-','-','-','-'];
  function table(r0,cL,spanL,rows,n){
    var cY=cL+spanL;
    rows.forEach(function(row,i){
      var r=r0+i;
      put(r,cL,spanL,row[0],'l '+(row[1]||''));
      for(var k=0;k<n;k++){
        put(r,cY+k,1,row[2]?String(row[2][k]):'','c');
      }
    });
    box(r0,r0+rows.length-1,cL,cY+n-1);
  }
  var T1=[
    ['Oikaistu tuloslaskelma (Yritystutkimus ry','',YRS],['','',null],
    ['LIIKEVAIHTO','h',pc([100,63,65,81,90])],
    ['Liiketoiminnan muut tuotot','',pc([100,24,0,260,186])],
    ['Liiketoiminnan tuotot yhteensä','b',pc([100,63,65,81,90])],
    ['Aine- ja tarvikekäyttö','',pc([100,62,78,116,157])],
    ['Ulkopuoliset palvelut','',D],
    ['Henkilöstökulut','',pc([100,79,81,90,93])],
    ['Liiketoiminnan muut kulut','',pc([100,70,64,72,72])],
    ['Valmistevaraston muutos','',pc([100,601,472,-214,824])],
    ['KÄYTTÖKATE','h',pc([100,21,16,28,42])],
    ['Suunnitelman mukaiset poistot','',pc([100,89,77,93,89])],
    ['LIIKETULOS','h',pc([100,7,2,13,31])],
    ['Tuotot osuuksista ja muista sijoituksista','',D],
    ['Muut korko- ja rahoitustuotot','',pc([100,41,6,96,26])],
    ['Korkokulut ja muut rahoituskulut','',pc([100,59,40,45,35])],
    ['Kurssierot','',D],
    ['Välittömät verot','',pc([100,3,0,10,29])],
    ['NETTOTULOS','h',pc([100,3,-1,11,32])],
    ['Satunnaiset tuotot','',D],
    ['Satunnaiset kulut','',D],
    ['KOKONAISTULOS','h',pc([100,3,-1,11,32])],
    ['Poistoeron muutos','',D],
    ['TILIKAUDEN TULOS','h',pc([100,3,-1,11,32])]
  ];
  var T2=[
    ['Oikaistu tase vastaavaa (Yritystutkimus 201','',YRS],
    ['Vastaavaa','b',null],['PYSYVÄT VASTAAVAT','h',null],['Aineettomat hyödykkeet','',null],
    ['Liikearvo','',DA],
    ['Muut aineettomat hyödykkeet','',pc([100,64,128,82,39])],
    ['Aineettomat hyödykkeet yhteensä','b',pc([100,64,128,82,39])],
    ['Aineelliset hyödykkeet','',null],
    ['Maa- ja vesialueet','',pc([100,100,100,100,100])],
    ['Rakennukset ja rakennelmat','',pc([100,98,95,93,91])],
    ['Koneet ja kalustot','',pc([100,78,56,78,69])],
    ['Muut aineelliset hyödykkeet','',pc([100,92,84,89,84])],
    ['Aineelliset hyödykkeet yhteensä','b',pc([100,92,84,89,84])],
    ['Sijoitukset','',null],
    ['Sisäiset osakkeet ja osuudet','',D],
    ['Muut osakkeet ja osuudet','',pc([100,100,100,100,100])],
    ['Sisäiset saamiset','',D],['Muut saamiset','',D],
    ['Sijoitukset ja pitkäaikaiset saamiset','b',pc([100,100,100,100,100])],
    ['Leasingomaisuus','b',D],
    ['VAIHTUVAT VASTAAVAT','h',null],['Vaihto-omaisuus','',null],
    ['Aineet ja tarvikkeet','',pc([100,90,89,75,74])],
    ['Keskeneräiset tuotteet','',pc([100,14,194,155,470])],
    ['Valmiit tuotteet','',pc([100,908,908,798,797])],
    ['Muu vaihto-omaisuus','',D],
    ['Vaihto-omaisuus yhteensä','b',pc([100,108,119,101,123])],
    ['Myyntisaamiset','',pc([100,142,163,273,203])],
    ['Sisäiset myyntisaamiset','',D],
    ['Muut saamiset','',pc([100,515,414,105,93])],
    ['Lyhytaikaiset saamiset yhteensä','b',pc([100,176,186,258,193])],
    ['Rahat ja pankkisaamiset','b',pc([100,24,28,20,25])],
    ['','',null],
    ['Vastaavaa yhteensä','b',pc([100,88,86,91,86])]
  ];
  var T3=[
    ['Oikaistu tase vastattavaa (Yritystutkimus 201','',YRS],
    ['Vastattavaa','b',null],['OMA PÄÄOMA','h',null],
    ['Osakepääoma','',pc([100,100,100,100,100])],
    ['Ylikurssirahasto','',D],['Muut rahastot','',D],
    ['Kertyneet voittovarat','',pc([100,153,140,139,148])],
    ['Tilikauden tulos','',pc([100,3,-1,11,32])],
    ['Taseen oma pääoma yhteensä','b',pc([100,86,77,82,96])],
    ['Poistoero','b',D],['Oman pääoman oikaisut','b',D],
    ['Oikaistu oma pääoma yhteensä','b',pc([100,86,77,82,96])],
    ['VIERAS PÄÄOMA','h',null],
    ['Pääomalainat','',D],
    ['Lainat rahoituslaitoksilta','',pc([100,92,84,68,44])],
    ['Muut pitkäaikaiset velat','',D],
    ['Pitkäaikainen vieras pääoma yhteensä','b',pc([100,93,85,70,45])],
    ['Laskennallinen verovelka','b',D],['Pakolliset varaukset','b',D],['Leasingvastuut','b',D],
    ['Korolliset lyhytaikaiset velat','',pc([100,59,53,142,159])],
    ['Saadut ennakot','',D],
    ['Ostovelat','',pc([100,40,174,149,114])],
    ['Sisäiset ostovelat','',D],
    ['Muut korottomat lyhytaikaiset velat','',pc([100,97,107,116,99])],
    ['Lyhytaikainen vieras pääoma yhteensä','b',pc([100,86,99,123,112])],
    ['','',null],
    ['Vastattavaa yhteensä','b',pc([100,88,86,91,86])]
  ];
  table(155,1,4,T1,10);
  table(155,16,5,T2,10);
  table(155,32,4,T3,9);

  /* yellow margins, banners, notes */
  for(r=R0;r<=R1;r++){mark(r,0,'y');mark(r,0,'br');}
  for(r=R0;r<=150;r++){mark(r,36,'y');mark(r,36,'br');mark(r,35,'br');}
  function banner(r,text,span){
    for(var c=1;c<nC;c++){mark(r,c,'y');mark(r,c,'bb');mark(r-1,c,'bb');}
    put(r,1,span,text,'l h y');
  }
  banner(151,'TRENDIANALYYSIT :(Tuloslaskelma, Tase vastaavaa, Tase vastattavaa)',12);
  mark(151,35,'br');mark(151,36,'br');
  banner(205,'KASSAVIRTALASKELMA:',8);mark(205,17,'br');
  put(152,1,13,'Trendianalyyseistä selviää prosentuaalinen kehitys valittuun vertailuvuoteen. Tässä tutkimuksessa vertailuvuotena on vuosi 2008, joka merkitään 100%:na.','l ls2');
  put(153,1,12,'Joissain kohdissa saattaa esiintyä teksti #DIV/0! Tai #JAKO/0!, mikä tarkoittaa että kohdassa ei ole vertailtavaa lukua tilinpäätöksessä.','l ls1');
  put(206,1,16,'Kassavirtalaskelmasta selviää, miten yrityksen myynnistä saadut tuotot ovat riittäneet kulujen kattamiseen. Tulevat vuodet saat jatkamalla kaavaa vetämällä oikealle.','l ls2');
  put(207,2,12,'Toimintajäämä = Myyntitulojen määrä, kun liiketoiminnan lyhytvaikutteiset menot on maksettu.','l ls2');
  put(208,2,25,'Rahoitusjäämä = Miten yritys pystyy selviytymään juoksevista maksuista.&#160; Positiivinen merkitsee että yritys pystyy ainakin osittain suorittamaan investointinsa tulorahoituksella ja mahdollisesti lyhentämään velkojaan.','l ls2');
  put(209,2,14,'Investointijäämä = Positiiivinen tarkoittaa että liiketoiminnasta saadut tulot ovat riittäneet aineellisiin ja aineettomiin hyödykkeisiin.','l ls1');
  mark(151,0,'bb');

  /* cash-flow table */
  var H7='#######',H8='########',H4='####',H5='#####',Z='-&#160;&#160;&#160;I';
  var Z4=[Z,Z,Z,Z];
  var T4=[
    [210,'','',null],
    [211,'','Liikevaihto',[H7,H7,H7,H7,H7,Z].concat(Z4)],
    [212,'-/+','Myyntisaamisten lisäys / vähennys',['62 550,45 I','-36 362,79 I','- 18 295,66 I','- 35 857,95 I','60 985,01 I',H4].concat(Z4)],
    [213,'','Myynnin kassaan maksut',[H7,H7,H7,H7,H7,H4].concat(Z4)],
    [214,'','',['','','','','','','','','','']],
    [215,'+','Liiketoiminnan muut tuotot',['4 250,00 I','1 000,00 I',Z,'11 033,49 I','7 885,82 I',Z].concat(Z4)],
    [216,'-','Ostot tilik aikana',[H8,H8,'-273 161,93 I',H8,'-553 579,75 I',Z].concat(Z4)],
    [217,'+/-','Ostovelkojen lisäys / vähennys',['-29 285,63 I','- 10 964,16 I','24 451,14 I','- 4 582,56 I','- 6 442,63 I',H5].concat(Z4)],
    [218,'','',[H7,H7,H7,H7,H7,H4].concat(Z4)]
  ];
  T4.forEach(function(row){
    var r=row[0];
    put(r,1,1,row[1],'r');
    put(r,2,6,row[2],'l');
    for(var k=0;k<10;k++){
      if(!row[3]){put(r,8+k,1,String(YRS[k]),'c yb');continue;}
      var v=row[3][k];
      put(r,8+k,1,v,v.charAt(0)==='#'?'c ha':'r');
    }
  });
  box(210,218,1,17);
  for(c=1;c<8;c++){delete g[209][c].cl.bb;}

  /* render grid */
  var h='<colgroup><col style="width:23px">';
  W.forEach(function(w){h+='<col style="width:'+w+'px">';});
  h+='</colgroup><thead><tr><th></th>';
  for(c=0;c<nC;c++)h+='<th'+(c===23?' class="csel"':'')+'>'+cname(c)+'</th>';
  h+='</tr></thead><tbody>';
  for(r=R0;r<=R1;r++){
    h+='<tr><td class="rh'+(r===143?' rsel':'')+'">'+r+'</td>';
    for(c=0;c<nC;c++){
      var o=g[r][c];
      if(o.cov)continue;
      var cl=Object.keys(o.cl);
      var last=g[r][c+o.span-1];
      if(last.cl.br&&cl.indexOf('br')<0)cl.push('br');
      if(r===143&&c===23)cl.push('sel');
      h+='<td'+(o.span>1?' colspan="'+o.span+'"':'')+(cl.length?' class="'+cl.join(' ')+'"':'')+'>'+o.t+'</td>';
    }
    h+='</tr>';
  }
  h+='</tbody>';
  var tbl=document.getElementById('grid');
  tbl.innerHTML=h;
  tbl.style.width=(23+W.reduce(function(a,b){return a+b;},0))+'px';

  /* charts: coordinates below are window coordinates of the picture */
  var COL=['#4f81bd','#c0504d','#9bbb59','#8064a2'],GRID='#868686';
  function svgOpen(b,top){
    var x=b[0]+2,y=b[1]+(top?1:2),w=b[2]-4,hh=b[3]-(top?3:4);
    return '<svg width="'+w+'" height="'+hh+'" viewBox="'+x+' '+y+' '+w+' '+hh+'">';
  }
  function ln(x1,y1,x2,y2,col,sw){return '<line x1="'+x1+'" y1="'+y1+'" x2="'+x2+'" y2="'+y2+'" stroke="'+col+'" stroke-width="'+(sw||1.2)+'"/>';}
  function tx(x,y,s,anchor,cl){return '<text x="'+x+'" y="'+y+'"'+(anchor?' text-anchor="'+anchor+'"':'')+(cl?' class="'+cl+'"':'')+'>'+s+'</text>';}
  function marker(x,y,col){return '<rect x="'+(x-2)+'" y="'+(y-2)+'" width="4" height="4" fill="'+col+'"/>';}
  function lineChart(id,o){
    var s=svgOpen(o.box);
    o.title.forEach(function(t){s+=tx(t[0],t[1],t[2],'','tt');});
    var yTop=o.yTop,yBot=o.yBot,mx=o.max,mn=o.min;
    function Y(v){return yBot-(v-mn)*(yBot-yTop)/(mx-mn);}
    var cw=(o.x1-o.x0)/5,i;
    for(i=0;i<=5;i++){var xx=o.x0+i*cw;s+=ln(xx,yTop,xx,yBot,GRID);}
    for(var v=mn;v<=mx;v+=o.step){s+=ln(o.x0-2,Y(v),o.x1,Y(v),GRID);s+=tx(o.x0-4,Y(v)+2,v+' %','end');}
    for(i=0;i<5;i++){s+=tx(o.x0+(i+.5)*cw,o.xl,YRS[i],'middle');}
    o.series.forEach(function(a,k){
      var pts=a.map(function(v,i){return (o.x0+(i+.5)*cw)+','+Y(v);}).join(' ');
      s+='<polyline points="'+pts+'" fill="none" stroke="'+COL[k]+'" stroke-width="1.400"/>';
      a.forEach(function(v,i){s+=marker(o.x0+(i+.5)*cw,Y(v),COL[k]);});
    });
    o.legend.forEach(function(l){
      s+=ln(l[0],l[1],l[0]+14,l[1],COL[l[3]],1.4)+marker(l[0]+7,l[1],COL[l[3]]);
      s+=tx(l[0]+17,l[1]+2,l[2]);
    });
    s+='</svg>';
    document.getElementById(id).innerHTML=s;
  }
  function barChart(id,o){
    var s=svgOpen(o.box,true),i;
    o.vx.forEach(function(x){s+=ln(x,168,x,o.base,GRID);});
    o.hy.forEach(function(h){s+=ln(o.vx[0]-2,h[0],o.vx[o.vx.length-1],h[0],GRID);s+=tx(o.vx[0]-5,h[0]+2.5,h[1],'end','big6');});
    (o.bars||[]).forEach(function(b){
      s+='<rect x="'+b[0]+'" y="168" width="'+o.bw+'" height="'+(b[1]-168)+'" fill="#c0504d"/>';
      s+='<rect x="'+b[0]+'" y="'+b[1]+'" width="'+o.bw+'" height="'+(o.base-b[1])+'" fill="#4f81bd"/>';
    });
    for(i=0;i<5;i++)s+=tx(o.xc[i],o.xl,YRS[i],'middle');
    (o.legend||[]).forEach(function(l){
      if(l[3])s+='<rect x="'+(l[0]-5)+'" y="'+(l[1]-3)+'" width="4" height="4" fill="'+l[3]+'"/>';
      s+=tx(l[0],l[1]+2,l[2]);
    });
    s+='</svg>';
    document.getElementById(id).innerHTML=s;
  }
  barChart('ch-a',{box:[41,168,254,70],vx:[99,119,139,159,179,199],base:219,bw:8,
    hy:[[170.700,'600 000,00 €'],[178.700,'500 000,00 €'],[186.700,'400 000,00 €'],[194.700,'300 000,00 €'],[202.700,'200 000,00 €'],[210.700,'100 000,00 €'],[218.700,'-&#160;&#160;&#160;€']],
    bars:[[105.500,177.300],[126,183.300],[146,186],[165.700,184],[185.700,178]],
    xc:[109.500,130,150,169.700,189.700],xl:231,
    legend:[[217,172,'pääoma yht'],[217,184,'Oikaistu oma pääoma yht','#4f81bd']]});
  barChart('ch-b',{box:[329,168,268,72],vx:[357.500,384.500,411.500,438.500,465.500,492.600],base:221,bw:11,
    hy:[[176,'40 %'],[187,'30 %'],[199,'20 %'],[210,'10 %'],[221,'0 %']],
    bars:[[366,174],[393,175],[420,179],[447,177.700],[474,168]],
    xc:[371.500,398.500,425.500,452.500,479.500],xl:233,
    legend:[[510,171,'Pitkäaikainen vieras pääoma','#c0504d'],[510,183,'Oikaistu oma pääoma','#4f81bd']]});
  barChart('ch-c',{box:[611,168,264,72],vx:[662,702,742,782,822,862],base:220,bw:0,
    hy:[[175,'100 000,00 €'],[197.500,'50 000,00 €'],[220,'-&#160;&#160;&#160;€']],
    bars:[],xc:[684,725,765,806,847],xl:232});
  lineChart('ch-d',{box:[37,678,251,157],
    title:[[162,692,'Tuloslaskelma, prosentuaalinen kehitys 2008-'],[162,704,'2012']],
    x0:66,x1:281,yTop:715.500,yBot:810.300,min:-20,max:120,step:20,xl:808,
    series:[[100,63,65,81,90],[100,21,16,28,42],[100,3,-1,11,32]],
    legend:[[79,824,'Liikevaihto',0],[134,824,'Käyttökate',1],[188,824,'Tilikauden tulos',2]]});
  lineChart('ch-e',{box:[295,678,245,158],
    title:[[417,693,'Tase vastaavaa, prosentuaalinen kehitys 2008-'],[417,705,'2012']],
    x0:316,x1:532,yTop:716,yBot:788.700,min:0,max:140,step:20,xl:800,
    series:[[100,92,84,89,84],[100,108,119,101,123]],
    legend:[[343,813,'Aineelliset hyödykkeet (rakennukset, koneet)',0],[343,826,'Vaihto-omaisuus (raaka-aine, keskener. tuotteet)',1]]});
  lineChart('ch-f',{box:[549,678,239,158],
    title:[[668,693,'Tase vastattavaa, prosentuaalinen kehitys'],[668,705,'2008-2012']],
    x0:577,x1:780,yTop:716,yBot:788.700,min:0,max:140,step:20,xl:800,
    series:[[100,86,77,82,96],[100,93,85,70,45],[100,86,99,123,112]],
    legend:[[576,814,'Oikaistu oma pääoma',0],[672,814,'Pitkäaikainen vieras pääoma',1],[576,826,'Lyhytaikainen vieras pääoma',2]]});
  lineChart('ch-g',{box:[944,679,266,157],
    title:[[1076,693,'Tuloslaskelma, prosentuaalinen kehitys 2008-2012']],
    x0:974.400,x1:1200,yTop:705,yBot:811,min:-20,max:120,step:20,xl:808,
    series:[[100,63,64,80,90],[100,21,15,28,41],[100,2,-1,11,30],[100,7,2,12,30]],
    legend:[[968,825,'Liikevaihto',0],[1022,825,'Käyttökate',1],[1077,825,'Tilikauden tulos',2],[1147,825,'Liiketulos',3]]});
  lineChart('ch-h',{box:[1216,680,263,173],
    title:[[1347,695,'Trendianalyysi  tase vastaavaa 2008-2012']],
    x0:1245,x1:1469,yTop:707,yBot:806,min:0,max:300,step:25,xl:817,
    series:[[100,78,56,78,69],[100,90,89,75,74],[100,142,163,273,203],[100,24,28,20,25]],
    legend:[[1264,830,'Koneet ja kalustot',0],[1347,830,'Aineet ja tarvikkeet',1],[1264,842,'Myyntisaamiset',2],[1347,842,'Rahat ja pankkisaamiset',3]]});
  lineChart('ch-i',{box:[1487,682,272,167],
    title:[[1623,697,'Trendianalyysi  tase vastattavaa 2008-2012']],
    x0:1519,x1:1739,yTop:709,yBot:802,min:0,max:200,step:25,xl:813,
    series:[[100,150,139,139,148],[100,92,84,68,44],[100,59,53,142,159],[100,40,174,149,114]],
    legend:[[1530,826,'Kertyneet voittovarat',0],[1622,826,'Lainat rahoituslaitoksilta',1],[1530,839,'Korolliset lyhytaikaiset velat',2],[1622,839,'Ostovelat',3]]});
})();
```
